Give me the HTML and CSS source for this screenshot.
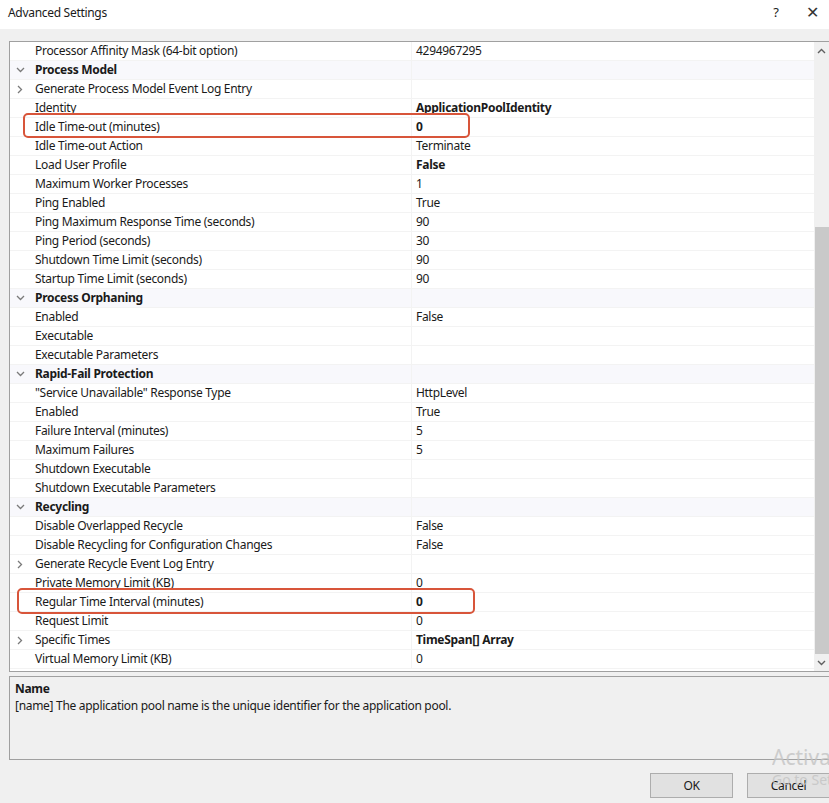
FILE: index.html
```
<!DOCTYPE html>
<html>
<head>
    <title>Advanced Settings</title>
    <link rel="stylesheet" href="styles.css">
</head>
<body>
    <div class="dialog">
        <div class="titlebar">
            <span class="title">Advanced Settings</span>
            <span class="help">?</span>
            <span class="close">&#x2715;</span>
        </div>
        <div class="dialog-body">
            <div class="grid">
                <div class="rows">
                    <div class="row"><div class="gutter"></div><div class="name">Processor Affinity Mask (64-bit option)</div><div class="value">4294967295</div></div>
                    <div class="row category"><div class="gutter"><svg class="chev" width="9" height="6" viewBox="0 0 9 6"><polyline points="1,1 4.5,4.5 8,1"/></svg></div><div class="name">Process Model</div><div class="value"></div></div>
                    <div class="row"><div class="gutter"><svg class="chev" width="6" height="9" viewBox="0 0 6 9"><polyline points="1,1 4.5,4.5 1,8"/></svg></div><div class="name">Generate Process Model Event Log Entry</div><div class="value"></div></div>
                    <div class="row"><div class="gutter"></div><div class="name">Identity</div><div class="value bold">ApplicationPoolIdentity</div></div>
                    <div class="row"><div class="gutter"></div><div class="name">Idle Time-out (minutes)</div><div class="value bold">0</div></div>
                    <div class="row"><div class="gutter"></div><div class="name">Idle Time-out Action</div><div class="value">Terminate</div></div>
                    <div class="row"><div class="gutter"></div><div class="name">Load User Profile</div><div class="value bold">False</div></div>
                    <div class="row"><div class="gutter"></div><div class="name">Maximum Worker Processes</div><div class="value">1</div></div>
                    <div class="row"><div class="gutter"></div><div class="name">Ping Enabled</div><div class="value">True</div></div>
                    <div class="row"><div class="gutter"></div><div class="name">Ping Maximum Response Time (seconds)</div><div class="value">90</div></div>
                    <div class="row"><div class="gutter"></div><div class="name">Ping Period (seconds)</div><div class="value">30</div></div>
                    <div class="row"><div class="gutter"></div><div class="name">Shutdown Time Limit (seconds)</div><div class="value">90</div></div>
                    <div class="row"><div class="gutter"></div><div class="name">Startup Time Limit (seconds)</div><div class="value">90</div></div>
                    <div class="row category"><div class="gutter"><svg class="chev" width="9" height="6" viewBox="0 0 9 6"><polyline points="1,1 4.5,4.5 8,1"/></svg></div><div class="name">Process Orphaning</div><div class="value"></div></div>
                    <div class="row"><div class="gutter"></div><div class="name">Enabled</div><div class="value">False</div></div>
                    <div class="row"><div class="gutter"></div><div class="name">Executable</div><div class="value"></div></div>
                    <div class="row"><div class="gutter"></div><div class="name">Executable Parameters</div><div class="value"></div></div>
                    <div class="row category"><div class="gutter"><svg class="chev" width="9" height="6" viewBox="0 0 9 6"><polyline points="1,1 4.5,4.5 8,1"/></svg></div><div class="name">Rapid-Fail Protection</div><div class="value"></div></div>
                    <div class="row"><div class="gutter"></div><div class="name">"Service Unavailable" Response Type</div><div class="value">HttpLevel</div></div>
                    <div class="row"><div class="gutter"></div><div class="name">Enabled</div><div class="value">True</div></div>
                    <div class="row"><div class="gutter"></div><div class="name">Failure Interval (minutes)</div><div class="value">5</div></div>
                    <div class="row"><div class="gutter"></div><div class="name">Maximum Failures</div><div class="value">5</div></div>
                    <div class="row"><div class="gutter"></div><div class="name">Shutdown Executable</div><div class="value"></div></div>
                    <div class="row"><div class="gutter"></div><div class="name">Shutdown Executable Parameters</div><div class="value"></div></div>
                    <div class="row category"><div class="gutter"><svg class="chev" width="9" height="6" viewBox="0 0 9 6"><polyline points="1,1 4.5,4.5 8,1"/></svg></div><div class="name">Recycling</div><div class="value"></div></div>
                    <div class="row"><div class="gutter"></div><div class="name">Disable Overlapped Recycle</div><div class="value">False</div></div>
                    <div class="row"><div class="gutter"></div><div class="name">Disable Recycling for Configuration Changes</div><div class="value">False</div></div>
                    <div class="row"><div class="gutter"><svg class="chev" width="6" height="9" viewBox="0 0 6 9"><polyline points="1,1 4.5,4.5 1,8"/></svg></div><div class="name">Generate Recycle Event Log Entry</div><div class="value"></div></div>
                    <div class="row"><div class="gutter"></div><div class="name">Private Memory Limit (KB)</div><div class="value">0</div></div>
                    <div class="row"><div class="gutter"></div><div class="name">Regular Time Interval (minutes)</div><div class="value bold">0</div></div>
                    <div class="row"><div class="gutter"></div><div class="name">Request Limit</div><div class="value">0</div></div>
                    <div class="row"><div class="gutter"><svg class="chev" width="6" height="9" viewBox="0 0 6 9"><polyline points="1,1 4.5,4.5 1,8"/></svg></div><div class="name">Specific Times</div><div class="value bold">TimeSpan[] Array</div></div>
                    <div class="row"><div class="gutter"></div><div class="name">Virtual Memory Limit (KB)</div><div class="value">0</div></div>
                </div>
                <div class="scrollbar">
                    <div class="arrow"><svg width="9" height="6" viewBox="0 0 9 6"><polyline points="1,5 4.5,1.5 8,5"/></svg></div>
                    <div class="track"><div class="thumb"></div></div>
                    <div class="arrow"><svg width="9" height="6" viewBox="0 0 9 6"><polyline points="1,1 4.5,4.5 8,1"/></svg></div>
                </div>
                <!-- red callouts drawn over the grid -->
                <div class="callout callout-idle"></div>
                <div class="callout callout-regular"></div>
            </div>
            <div class="description">
                <div class="desc-title">Name</div>
                <div class="desc-text">[name] The application pool name is the unique identifier for the application pool.</div>
            </div>
            <div class="buttons">
                <button class="btn">OK</button>
                <button class="btn">Cancel</button>
            </div>
        </div>
        <div class="watermark">
            <div class="wm-big">Activate Windows</div>
            <div class="wm-small">Go to Settings to activate Windows.</div>
        </div>
    </div>
</body>
</html>
```

FILE: styles.css
```
body {
    margin: 0;
    overflow: hidden;
    font-family: "Noto Sans", "Open Sans", sans-serif;
    font-size: 12px;
    letter-spacing: -0.3px;
    color: #1a1a1a;
}
.dialog {
    position: relative;
    width: 829px;
    height: 803px;
    background-color: #f0f0f0;
    overflow: hidden;
}
.titlebar {
    height: 29px;
    display: flex;
    align-items: center;
    background-color: #ffffff;
    padding: 0 0 5px 8px;
    box-sizing: border-box;
}
.title {
    flex: 1;
    font-size: 12px;
}
.help {
    width: 38px;
    font-size: 13px;
    text-align: center;
}
.close {
    width: 34px;
    font-size: 16px;
    font-weight: 300;
    text-align: center;
    color: #333;
}
.dialog-body {
    padding: 12px 0 0 9px;
}
.grid {
    position: relative;
    display: flex;
    border: 1px solid #a0a0a0;
    border-right: none;
    background-color: #ffffff;
    height: 629px;
}
.rows {
    flex: 1;
}
.row {
    display: flex;
    height: 19px;
    line-height: 18px;
    border-bottom: 1px solid #f3f3f3;
    box-sizing: border-box;
    white-space: nowrap;
}
.row.category {
    background-color: #f8f8fc;
    font-weight: bold;
}
.gutter {
    width: 20px;
    display: flex;
    align-items: center;
    justify-content: center;
}
.chev {
    fill: none;
    stroke: #7a7a7a;
    stroke-width: 1.3;
}
.name {
    width: 376px;
    padding-left: 5px;
    border-right: 1px solid #f3f3f3;
    overflow: hidden;
}
.value {
    flex: 1;
    padding-left: 4px;
}
.bold {
    font-weight: bold;
}
.scrollbar {
    width: 15px;
    display: flex;
    flex-direction: column;
    background-color: #f0f0f0;
}
.arrow {
    height: 17px;
    display: flex;
    align-items: center;
    justify-content: center;
}
.arrow svg {
    fill: none;
    stroke: #606060;
    stroke-width: 1.4;
}
.track {
    flex: 1;
}
.thumb {
    margin: 168px 0 0 1px;
    height: 427px;
    background-color: #c9c9c9;
}
.callout {
    position: absolute;
    border: 2px solid #d8553a;
    border-radius: 5px;
}
.callout-idle {
    left: 13px;
    top: 71px;
    width: 443px;
    height: 21px;
}
.callout-regular {
    left: 7px;
    top: 546px;
    width: 454px;
    height: 22px;
}
.description {
    margin-top: 4px;
    height: 84px;
    border: 1px solid #a0a0a0;
    border-right: none;
    padding: 3px 0 0 5px;
    box-sizing: border-box;
}
.desc-title {
    font-weight: bold;
    line-height: 17px;
}
.desc-text {
    line-height: 17px;
}
.buttons {
    display: flex;
    justify-content: flex-end;
    gap: 14px;
    margin-top: 13px;
    margin-right: -1px;
}
.btn {
    width: 83px;
    height: 25px;
    font-family: "Noto Sans", "Open Sans", sans-serif;
    font-size: 12px;
    letter-spacing: -0.3px;
    color: #1a1a1a;
    background-color: #e1e1e1;
    border: 1px solid #adadad;
}
.watermark {
    position: absolute;
    left: 772px;
    top: 744px;
    color: #c4c4c4;
    opacity: 0.8;
    white-space: nowrap;
}
.wm-big {
    font-size: 21px;
    line-height: 27px;
    letter-spacing: 0;
}
.wm-small {
    font-size: 14px;
    line-height: 18px;
    letter-spacing: 0;
}
```
